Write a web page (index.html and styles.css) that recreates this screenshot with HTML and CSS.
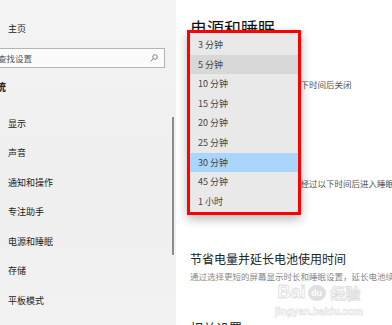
FILE: index.html
```html
<!DOCTYPE html>
<html lang="zh-CN">
<head>
    <meta charset="UTF-8">
    <title>电源和睡眠</title>
    <link rel="stylesheet" href="styles.css">
</head>
<body>

<div class="page">
    <div class="side">
        <div class="side-home">主页</div>
        <div class="side-search">
            <span>查找设置</span>
            <svg class="search-icon" width="8" height="8" viewBox="0 0 8 8">
                <circle cx="5" cy="3" r="2.3" fill="none" stroke="#777" stroke-width="0.9"/>
                <line x1="3.3" y1="4.7" x2="0.6" y2="7.4" stroke="#777" stroke-width="0.9"/>
            </svg>
        </div>
        <div class="side-group">系统</div>
        <ul class="side-nav">
            <li>显示</li>
            <li>声音</li>
            <li>通知和操作</li>
            <li>专注助手</li>
            <li>电源和睡眠</li>
            <li>存储</li>
            <li>平板模式</li>
        </ul>
        <div class="side-scroll"></div>
    </div>

    <div class="main">
        <h1 class="main-title">电源和睡眠</h1>
        <h3 class="main-sub">屏幕</h3>
        <p class="main-text">在接通电源的情况下，经过以下时间后关闭</p>
        <div class="main-select">10 分钟</div>
        <h3 class="main-sub main-sub-gap">睡眠</h3>
        <p class="main-text">在接通电源的情况下，电脑在经过以下时间后进入睡眠状态</p>
        <div class="main-select">30 分钟</div>
        <h2 class="main-head">节省电量并延长电池使用时间</h2>
        <p class="main-desc">通过选择更短的屏幕显示时长和睡眠设置，延长电池续航时间。</p>
        <h2 class="main-head main-related">相关设置</h2>
    </div>

    <div class="watermark">
        <div class="wm-logo">
            <span class="wm-word">Bai</span>
            <span class="wm-paw">du</span>
            <span class="wm-word wm-cn">经验</span>
        </div>
        <div class="wm-url">jingyan.baidu.com</div>
    </div>

    <ul class="dropdown">
        <li>3 分钟</li>
        <li class="hover">5 分钟</li>
        <li>10 分钟</li>
        <li>15 分钟</li>
        <li>20 分钟</li>
        <li>25 分钟</li>
        <li class="selected">30 分钟</li>
        <li>45 分钟</li>
        <li>1 小时</li>
    </ul>
</div>

</body>
</html>
```

FILE: styles.css
```css
* {
    box-sizing: border-box;
}
body {
    margin: 0;
    font-family: "Noto Sans CJK SC", "Noto Sans", sans-serif;
    color: #222;
    background: #fff;
}
ul, h1, h2, h3, p {
    margin: 0;
    padding: 0;
    list-style: none;
    font-weight: normal;
}
.page {
    position: relative;
    display: flex;
    width: 392px;
    height: 325px;
    overflow: hidden;
}

/* 左侧导航 */
.side {
    position: relative;
    flex: 0 0 176px;
    background: linear-gradient(#f3f3f3, #efefef 60%, #f2f2f2);
    font-size: 9px;
    white-space: nowrap;
}
.side-home {
    margin-top: 20px;
    padding-left: 8px;
    line-height: 18px;
}
.side-search {
    display: flex;
    align-items: center;
    justify-content: space-between;
    margin: 10px 0 0 -8px;
    padding: 0 6px 0 5px;
    width: 173px;
    height: 20px;
    border: 1px solid #b4b4b4;
    background: #fbfbfb;
    color: #555;
    font-size: 8.5px;
}
.side-group {
    margin: 12px 0 0 -15px;
    line-height: 14px;
    font-size: 10.5px;
    font-weight: bold;
}
.side-nav {
    margin-top: 14.5px;
}
.side-nav li {
    padding-left: 8px;
    height: 29.5px;
    line-height: 29.5px;
}
.side-scroll {
    position: absolute;
    left: 172px;
    top: 117px;
    width: 2px;
    height: 138px;
    background: #8c8c8c;
}

/* 右侧内容 */
.main {
    flex: 1;
    padding-left: 14px;
    white-space: nowrap;
    overflow: hidden;
}
.main-title {
    margin-top: 19px;
    font-size: 17px;
    line-height: 18px;
    color: #111;
}
.main-sub {
    margin-top: 16px;
    font-size: 12px;
    line-height: 14px;
}
.main-sub-gap {
    margin-top: 30px;
}
.main-text {
    margin-top: 11px;
    font-size: 8.5px;
    line-height: 12px;
    color: #555;
}
.main-select {
    margin-top: 8px;
    width: 96px;
    height: 24px;
    padding-left: 8px;
    font-size: 9px;
    line-height: 24px;
}
.main-head {
    margin-top: 30px;
    font-size: 12px;
    line-height: 16px;
    color: #222;
}
.main-desc {
    margin-top: 3px;
    font-size: 8.5px;
    line-height: 12px;
    color: #888;
}
.main-related {
    margin-top: 38px;
    font-size: 13px;
}

/* 水印 */
.watermark {
    position: absolute;
    left: 273px;
    top: 283px;
    width: 92px;
    text-align: center;
    color: #fff;
}
.wm-logo {
    display: flex;
    align-items: center;
    justify-content: center;
    gap: 2px;
    height: 19px;
}
.wm-word {
    font-family: "Liberation Sans", sans-serif;
    font-size: 18px;
    font-weight: bold;
    line-height: 19px;
    -webkit-text-stroke: 0.8px #dcdcdc;
}
.wm-cn {
    font-family: "Noto Sans CJK SC", sans-serif;
    font-size: 15px;
    margin-left: 3px;
}
.wm-paw {
    width: 18px;
    height: 16px;
    border-radius: 50%;
    background: #e0e0e0;
    color: #fff;
    font-family: "Liberation Sans", sans-serif;
    font-size: 9px;
    font-weight: bold;
    line-height: 17px;
}
.wm-url {
    margin-top: 4px;
    font-family: "Liberation Sans", sans-serif;
    font-size: 10px;
    font-weight: bold;
    -webkit-text-stroke: 0.6px #e0e0e0;
}

/* 下拉框 */
.dropdown {
    position: absolute;
    left: 187px;
    top: 30px;
    width: 114px;
    padding: 2px 0 1px;
    border: 3px solid #f00;
    background: #e9e9e9;
    box-shadow: 0 4px 10px rgba(0, 0, 0, .28);
    font-size: 9px;
    color: #444;
}
.dropdown li {
    height: 19.6px;
    line-height: 19.6px;
    padding-left: 8px;
}
.dropdown .hover {
    background: #d8d8d8;
}
.dropdown .selected {
    background: #aad6fb;
}
```
